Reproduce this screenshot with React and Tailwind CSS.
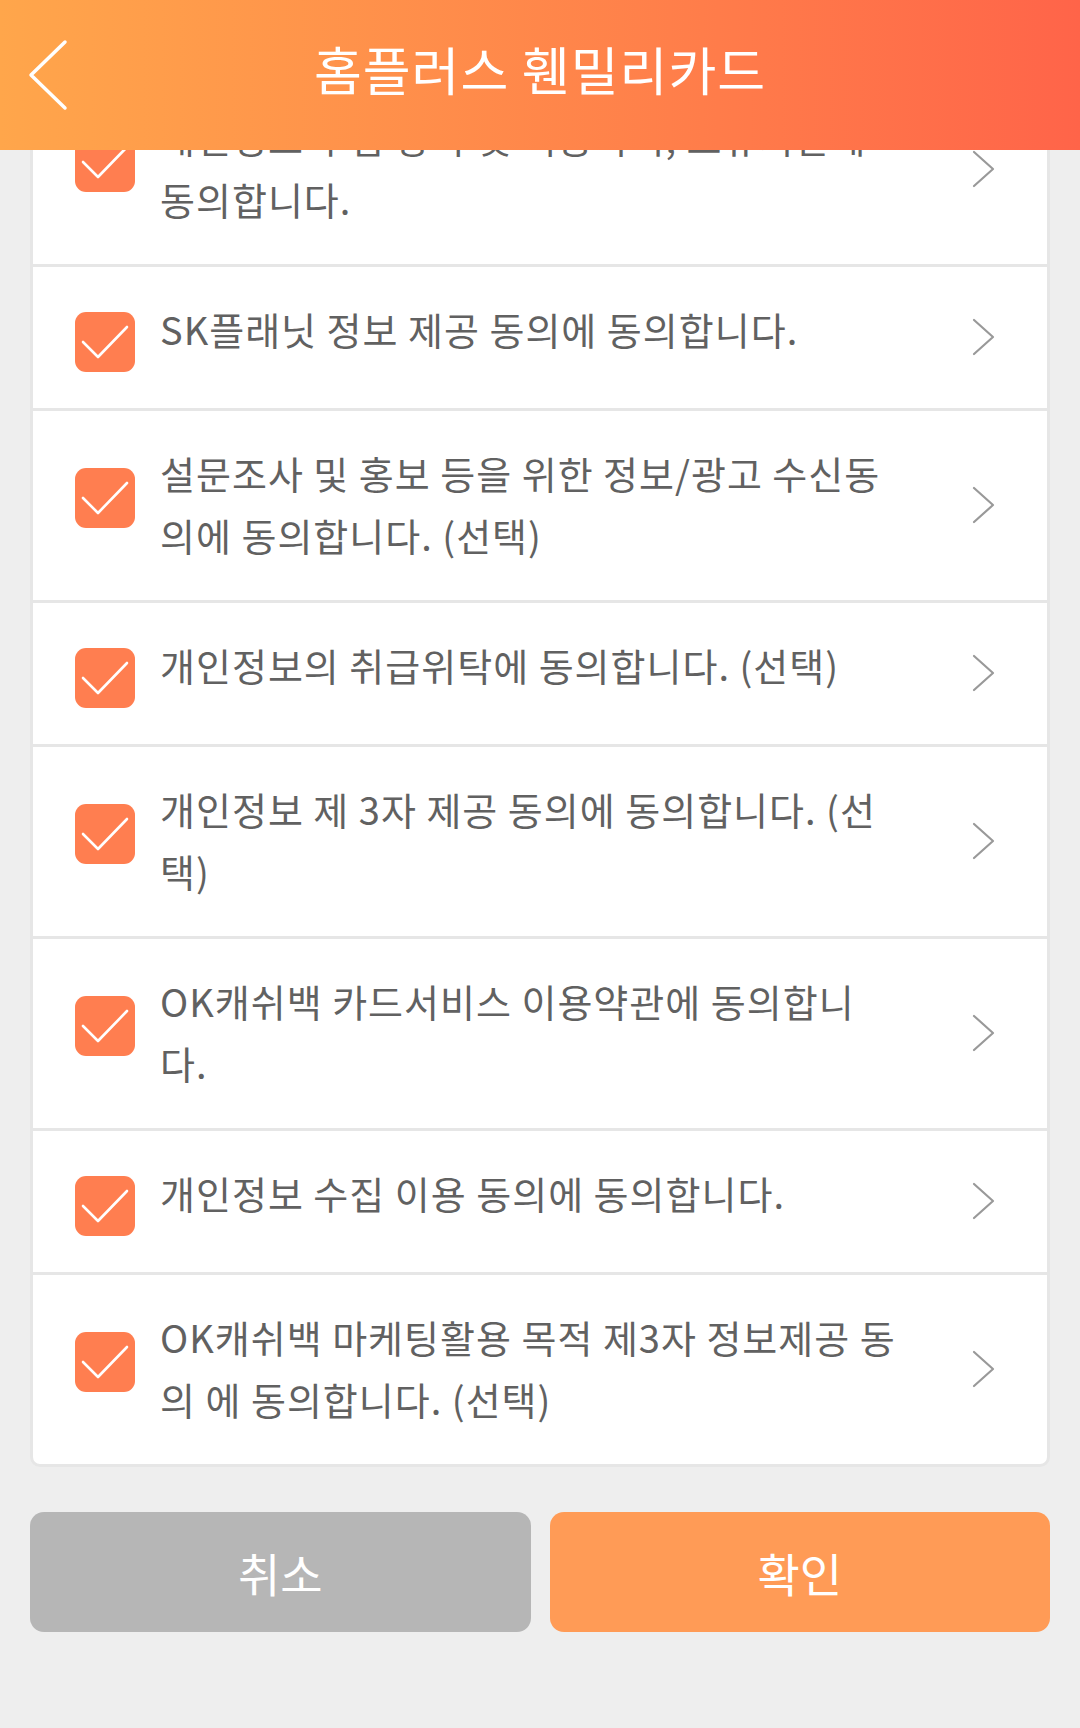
const FONT = { fontFamily: '"Noto Sans CJK KR", "Noto Sans", sans-serif' };

const items = [
  { lines: ['개인정보 수집 항목 및 이용목적, 보유기간에', '동의합니다.'] },
  { lines: ['SK플래닛 정보 제공 동의에 동의합니다.'] },
  { lines: ['설문조사 및 홍보 등을 위한 정보/광고 수신동', '의에 동의합니다. (선택)'] },
  { lines: ['개인정보의 취급위탁에 동의합니다. (선택)'] },
  { lines: ['개인정보 제 3자 제공 동의에 동의합니다. (선', '택)'] },
  { lines: ['OK캐쉬백 카드서비스 이용약관에 동의합니', '다.'] },
  { lines: ['개인정보 수집 이용 동의에 동의합니다.'] },
  { lines: ['OK캐쉬백 마케팅활용 목적 제3자 정보제공 동', '의 에 동의합니다. (선택)'] },
];

function CheckBox({ double }) {
  return (
    <div
      className={
        'w-[60px] h-[60px] shrink-0 rounded-[11px] bg-[#ff7e50] flex items-center justify-center ' +
        (double ? 'mt-[57px]' : 'mt-[45px]')
      }
    >
      <svg width="60" height="60" viewBox="0 0 60 60" fill="none">
        <path d="M8 30 L23 45 L52 15" stroke="#fff" strokeWidth="2.6" strokeLinecap="round" strokeLinejoin="round" />
      </svg>
    </div>
  );
}

function Chevron() {
  return (
    <svg className="self-center shrink-0 -mt-[2px]" width="24" height="38" viewBox="0 0 24 38" fill="none">
      <path d="M2 2 L21 19 L2 36" stroke="#999999" strokeWidth="2.2" strokeLinecap="round" strokeLinejoin="round" />
    </svg>
  );
}

function AgreeRow({ lines }) {
  const double = lines.length > 1;
  return (
    <div className={'box-content flex items-start pl-[42px] pr-[51px] ' + (double ? 'h-[189px]' : 'h-[141px]')}>
      <CheckBox double={double} />
      <div className="flex-1 ml-[25px] pt-[31px] text-[38px] tracking-[1px] leading-[62px] text-[#616161] whitespace-nowrap">
        {lines.map((l, i) => (
          <div key={i}>{l}</div>
        ))}
      </div>
      <Chevron />
    </div>
  );
}

export default function App() {
  return (
    <div className="relative w-[1080px] h-[1728px] bg-[#eeeeee] overflow-hidden" style={FONT}>
      <div className="absolute top-0 left-0 right-0 z-10 h-[150px] bg-linear-to-r from-[#ffa64b] to-[#ff6449] flex items-center justify-center">
        <svg className="absolute left-[26px] top-[38px]" width="46" height="74" viewBox="0 0 46 74" fill="none">
          <path d="M39 4 L5 37 L39 70" stroke="#fff" strokeWidth="3.5" strokeLinecap="round" strokeLinejoin="round" />
        </svg>
        <h1 className="text-white text-[52px] tracking-[1px] font-normal leading-none -mt-[12px]">홈플러스 휀밀리카드</h1>
      </div>

      <div className="mx-[30px] mt-[72px] bg-white border-[3px] border-[#e6e6e6] rounded-b-[10px] divide-y-[3px] divide-[#e6e6e6]">
        {items.map((it, i) => (
          <AgreeRow key={i} lines={it.lines} />
        ))}
      </div>

      <div className="flex gap-[19px] mx-[30px] mt-[45px]">
        <button className="flex-1 h-[120px] rounded-[14px] bg-[#b6b6b6] text-white text-[46px]">취소</button>
        <button className="flex-1 h-[120px] rounded-[14px] bg-[#ff9b56] text-white text-[46px]">확인</button>
      </div>
    </div>
  );
}
